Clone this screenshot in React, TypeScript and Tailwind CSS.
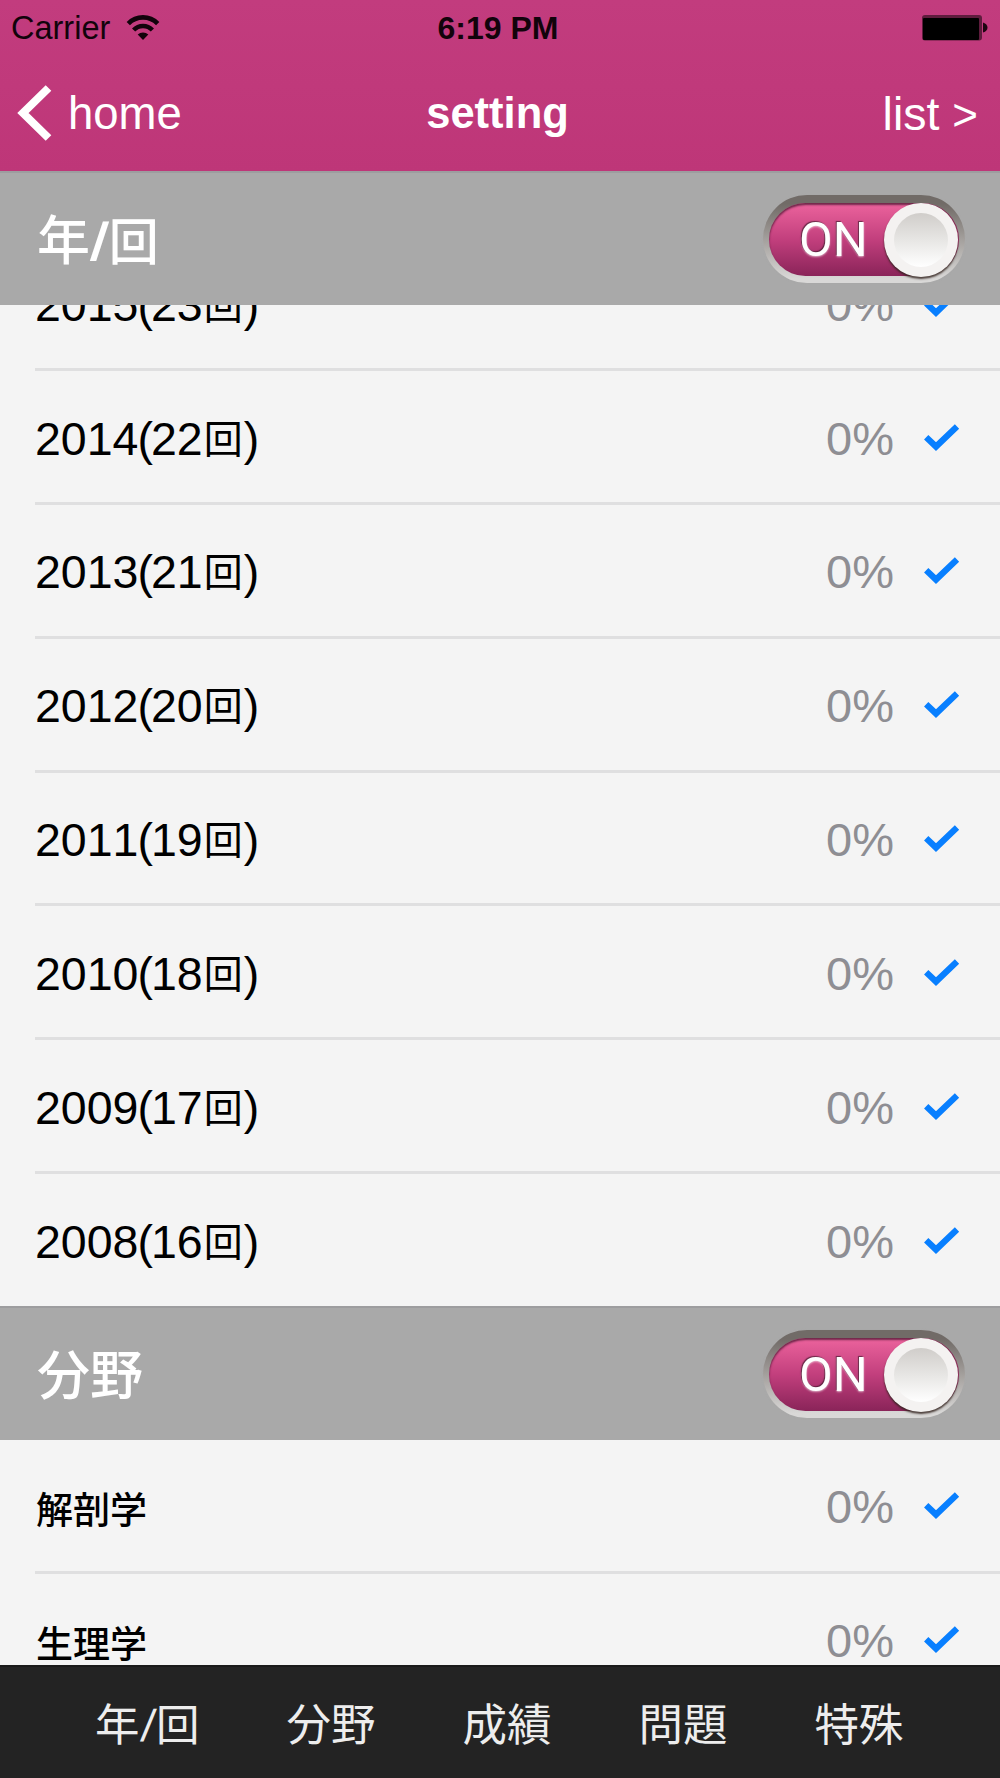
import { useState } from "react";

const years = [
  { year: "2015", round: "23" },
  { year: "2014", round: "22" },
  { year: "2013", round: "21" },
  { year: "2012", round: "20" },
  { year: "2011", round: "19" },
  { year: "2010", round: "18" },
  { year: "2009", round: "17" },
  { year: "2008", round: "16" },
];

const fields = ["解剖学", "生理学"];

const tabs = ["分野", "成績", "問題", "特殊"];

function WifiIcon() {
  return (
    <svg width="34" height="26" viewBox="0 0 34 26" fill="none" stroke="#12030b">
      <path d="M2.3 8.6 A20.5 20.5 0 0 1 31.7 8.6" strokeWidth="4.6" />
      <path d="M7.6 15 A13 13 0 0 1 26.4 15" strokeWidth="4.4" />
      <path d="M11.7 19.6 A7.5 7.5 0 0 1 22.3 19.6 L17 25 Z" fill="#12030b" stroke="none" />
    </svg>
  );
}

function BatteryIcon() {
  return (
    <svg width="68" height="28" viewBox="0 0 68 28">
      <rect x="1" y="1" width="60" height="25.5" rx="3" fill="#5e1c3d" />
      <rect x="2" y="4" width="56" height="22" rx="1" fill="#000" />
      <path d="M62 8.5 Q66.5 10 66.5 13.5 Q66.5 17 62 18.5 Z" fill="#1c0510" />
    </svg>
  );
}

function Check() {
  return (
    <svg width="36" height="28" viewBox="0 0 36 28" fill="none" className="block">
      <path d="M2.2 14.2 L12 23.6 L33 3.4" stroke="#087fff" strokeWidth="6.2" />
    </svg>
  );
}

function Toggle() {
  const [on, setOn] = useState(true);

  return (
    <button
      onClick={() => setOn(!on)}
      aria-pressed={on}
      className="h-[88px] w-[202px] rounded-full bg-gradient-to-b from-[#716b67] from-10% via-[#a39f9c] via-50% to-[#d9d8d7] to-95% px-[6px] pt-[8px] pb-[7px] shadow-[0_0_2px_#a9a9a9]"
    >
      <span className="flex h-[73px] w-[190px] items-center justify-between rounded-full bg-gradient-to-b from-[#ec639d] via-[#c23f7d] to-[#8a2459] pl-[30px] shadow-[inset_0_2px_2px_rgba(70,20,45,0.75)]">
        <span className="font-['Roboto',sans-serif] text-[49px] leading-[78px] text-white [text-shadow:-1px_-1px_1px_rgba(60,20,40,0.7),0_1px_2px_rgba(255,255,255,0.6)]">
          ON
        </span>
        <span className="mr-[1px] flex h-[74px] w-[74px] shrink-0 items-center justify-center rounded-full bg-[#f4f2f1] shadow-[0_2px_2px_rgba(50,35,30,0.85)]">
          <span className="h-[54px] w-[54px] rounded-full bg-gradient-to-b from-[#d0cdca] via-[#e7e6e4] to-white" />
        </span>
      </span>
    </button>
  );
}

function SectionHeader({ children }: { children: React.ReactNode }) {
  return (
    <div className="flex h-[134px] shrink-0 items-center justify-between border-t-2 border-[#9d9d9f] bg-[#a9a9a9] pr-[35px] pl-[37px]">
      <h2 className="pt-[4px] text-[53px] leading-none font-medium text-white">{children}</h2>
      <Toggle />
    </div>
  );
}

function Row({ children, last }: { children: React.ReactNode; last?: boolean }) {
  return (
    <li className={last ? "h-[132px] shrink-0 pl-[35px]" : "h-[133.8px] shrink-0 pl-[35px]"}>
      <div
        className={
          last
            ? "flex h-full items-center pr-[40px]"
            : "flex h-full items-center border-b-3 border-[#dfdfe0] pr-[40px]"
        }
      >
        <div className="flex-1">{children}</div>
        <span className="mr-[30px] pt-[3px] text-[47px] leading-none text-[#8e8e93]">0%</span>
        <Check />
      </div>
    </li>
  );
}

export default function App() {
  return (
    <div className="flex h-[1778px] w-[1000px] flex-col overflow-hidden bg-[#f4f4f4] font-['Liberation_Sans','Noto_Sans_CJK_JP',sans-serif] [font-kerning:none]">
      <header className="h-[171px] shrink-0 bg-gradient-to-b from-[#c23c7e] to-[#be3678]">
        <div className="grid h-[56px] grid-cols-3 items-center pr-[11px] pl-[11px] text-[32px] leading-none text-[#12030b]">
          <div className="flex items-center gap-[16px]">
            <span className="text-[32.5px]">Carrier</span>
            <WifiIcon />
          </div>
          <span className="pr-[4px] text-center font-bold">6:19 PM</span>
          <div className="flex justify-end">
            <BatteryIcon />
          </div>
        </div>
        <nav className="grid h-[115px] grid-cols-3 items-center pr-[22px] pb-[2px] pl-[17px] text-[45.5px] leading-none text-white">
          <a className="flex items-center gap-[15px]">
            <svg width="36" height="56" viewBox="0 0 36 56" fill="none">
              <path d="M31.5 3 L6 28 L31.5 53" stroke="#fff" strokeWidth="8" />
            </svg>
            <span className="pt-[3px]">home</span>
          </a>
          <h1 className="pt-[3px] text-center text-[43.5px] font-bold">setting</h1>
          <a className="pt-[3px] text-right text-[46.5px]">
            list <span className="text-[44px]">&gt;</span>
          </a>
        </nav>
      </header>

      <SectionHeader>
        年<span className="mx-[2px] inline-block -skew-x-8 font-bold">/</span>
        <span className="text-[50px]">回</span>
      </SectionHeader>
      {/* scrolled list, the first row is partly under the header */}
      <ul className="flex h-[1001px] shrink-0 flex-col justify-end overflow-hidden">
        {years.map(({ year, round }, i) => (
          <Row key={year} last={i === years.length - 1}>
            <p className="pt-[4px] text-[46.5px] leading-[50px] text-black">
              {year}
              <span className="-mr-[2px] -ml-[1px]">(</span>
              {round}
              <span className="mr-[1px] ml-[1px] align-[2px] text-[39px] leading-none">回</span>)
            </p>
          </Row>
        ))}
      </ul>

      <SectionHeader>分野</SectionHeader>
      <ul className="flex flex-1 flex-col overflow-hidden">
        {fields.map((name) => (
          <Row key={name}>
            <p className="pt-[13px] pl-[1px] text-[37px] leading-none font-medium text-black">{name}</p>
          </Row>
        ))}
      </ul>

      <footer className="flex h-[113px] shrink-0 items-center gap-[87px] border-t-2 border-[#1a1a1a] bg-[#232323] pt-[7px] pl-[95px] text-[44.5px] leading-none text-[#ededed]">
        <a>
          年<span className="mx-[2px] inline-block -skew-x-8">/</span>
          <span className="text-[43.5px]">回</span>
        </a>
        {tabs.map((tab) => (
          <a key={tab}>{tab}</a>
        ))}
      </footer>
    </div>
  );
}
